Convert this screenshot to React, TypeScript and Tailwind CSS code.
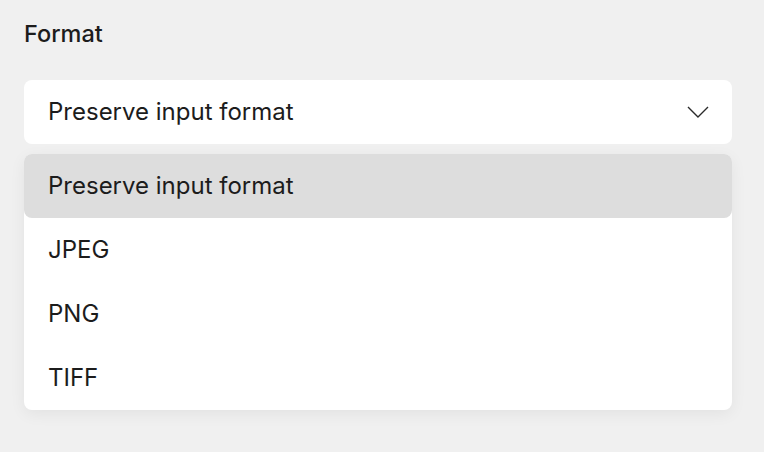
const options = ['Preserve input format', 'JPEG', 'PNG', 'TIFF'];

function Chevron() {
  return (
    <svg width="22" height="12" viewBox="0 0 22 12" fill="none" className="text-[#2a2a2a]">
      <polyline points="1,1 11,11 21,1" stroke="currentColor" strokeWidth="1.4" />
    </svg>
  );
}

export default function App() {
  const selected = 'Preserve input format';

  return (
    <div
      className="w-[764px] h-[452px] bg-[#f0f0f0] px-6 pt-[18px] text-[#1c1c1c]"
      style={{ fontFamily: 'Inter, "Noto Sans", sans-serif' }}
    >
      <div className="text-[23.5px] font-medium leading-[32px]">Format</div>

      <div className="w-[708px] mt-[30px] h-[64px] rounded-lg bg-white flex items-center justify-between pl-6 pr-[23px]">
        <span className="text-[24px] leading-none">{selected}</span>
        <Chevron />
      </div>

      <div className="w-[708px] mt-[10px] rounded-lg bg-white shadow-[0_4px_16px_rgba(0,0,0,0.06)]">
        {options.map((opt) => (
          <div
            key={opt}
            className={`h-[64px] flex items-center px-6 text-[24px] rounded-lg ${
              opt === selected ? 'bg-[#dddddd]' : ''
            }`}
          >
            {opt}
          </div>
        ))}
      </div>
    </div>
  );
}
